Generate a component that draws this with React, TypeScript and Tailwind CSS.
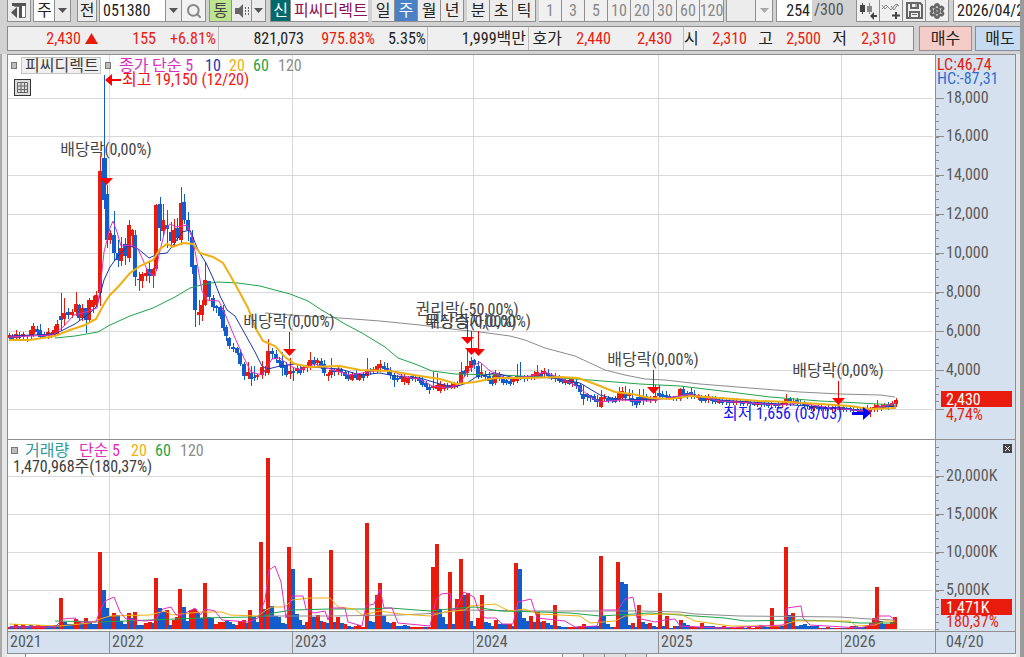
import type { ReactNode } from "react";
import { Search, Settings } from "lucide-react";

const RED = "#e81b0c";
const BLUE = "#125ccb";

// x, high, body top, body bottom, low, 1 = rising week
const candles: number[][] = [
  [9, 333, 335, 338, 340, 1], [12, 334, 336, 339, 340, 0], [16, 330, 334, 338, 340, 1], [19, 332, 335, 338, 339, 0],
  [23, 332, 334, 337, 338, 1], [27, 335, 335, 336, 341, 0], [31, 328, 330, 336, 338, 1], [33, 323, 326, 334, 336, 1],
  [37, 326, 329, 332, 334, 0], [40, 324, 330, 337, 338, 0], [44, 332, 335, 337, 337, 0], [48, 328, 332, 336, 338, 1],
  [51, 332, 333, 335, 337, 0], [54, 326, 330, 335, 336, 1], [57, 320, 324, 334, 335, 1], [61, 293, 316, 320, 330, 0],
  [64, 298, 313, 319, 325, 1], [68, 308, 312, 315, 318, 0], [72, 309, 312, 315, 317, 1], [76, 292, 304, 312, 315, 1],
  [79, 304, 305, 318, 320, 0], [82, 304, 308, 318, 320, 1], [86, 308, 308, 320, 332, 0], [89, 298, 300, 320, 321, 1],
  [93, 296, 300, 307, 312, 1], [96, 291, 295, 305, 306, 1], [100, 156, 171, 293, 305, 1], [104, 75, 158, 200, 208, 0],
  [107, 185, 194, 240, 247, 0], [110, 230, 233, 240, 243, 1], [114, 211, 235, 253, 260, 0], [118, 240, 253, 260, 266, 0],
  [121, 237, 248, 261, 265, 1], [125, 238, 244, 256, 264, 0], [129, 220, 225, 258, 261, 1], [132, 229, 230, 236, 246, 1],
  [135, 230, 235, 277, 285, 0], [139, 272, 279, 280, 290, 0], [142, 272, 274, 281, 287, 1], [146, 268, 273, 276, 280, 1],
  [149, 262, 269, 276, 282, 0], [153, 268, 269, 276, 287, 1], [156, 204, 205, 269, 270, 1], [160, 197, 204, 228, 240, 0],
  [163, 204, 220, 231, 236, 1], [167, 210, 225, 229, 247, 0], [171, 222, 232, 241, 245, 0], [174, 219, 230, 243, 245, 1],
  [177, 218, 228, 238, 240, 0], [181, 187, 203, 240, 244, 1], [184, 194, 202, 220, 223, 0], [188, 212, 220, 230, 240, 0],
  [192, 230, 237, 267, 273, 0], [195, 265, 265, 310, 326, 0], [199, 300, 312, 315, 324, 1], [202, 300, 305, 315, 320, 1],
  [205, 262, 280, 305, 305, 1], [209, 281, 281, 297, 300, 0], [213, 295, 298, 307, 310, 0], [216, 305, 306, 308, 312, 0],
  [220, 306, 307, 316, 318, 0], [223, 305, 310, 328, 330, 0], [226, 325, 327, 336, 340, 0], [229, 337, 338, 346, 348, 0],
  [233, 343, 347, 349, 351, 0], [237, 347, 348, 353, 354, 0], [240, 349, 353, 364, 365, 0], [244, 362, 364, 376, 379, 0],
  [248, 362, 372, 376, 378, 1], [251, 366, 373, 379, 385, 0], [254, 366, 377, 378, 380, 0], [257, 374, 375, 377, 379, 1],
  [262, 361, 367, 375, 378, 1], [265, 366, 370, 372, 375, 0], [268, 339, 351, 373, 374, 1], [272, 348, 351, 354, 358, 0],
  [276, 350, 354, 359, 362, 0], [279, 357, 360, 363, 366, 0], [282, 352, 361, 368, 375, 0], [286, 362, 365, 375, 376, 0],
  [290, 358, 371, 374, 378, 1], [293, 368, 371, 373, 380, 0], [297, 364, 368, 371, 373, 1], [300, 366, 369, 373, 374, 0],
  [303, 365, 367, 370, 372, 1], [307, 362, 365, 368, 371, 1], [310, 352, 360, 367, 369, 1], [314, 357, 360, 364, 366, 0],
  [317, 358, 360, 363, 367, 1], [321, 358, 361, 366, 368, 0], [324, 360, 364, 373, 375, 0], [328, 372, 374, 376, 380, 1],
  [331, 358, 370, 375, 377, 1], [334, 368, 370, 372, 375, 0], [338, 367, 369, 372, 374, 1], [341, 368, 369, 372, 375, 0],
  [345, 370, 372, 376, 378, 0], [348, 371, 375, 379, 380, 0], [352, 372, 374, 380, 380, 1], [356, 370, 374, 378, 379, 0],
  [359, 373, 374, 380, 380, 1], [363, 372, 374, 378, 380, 0], [367, 358, 371, 376, 377, 1], [370, 368, 370, 372, 374, 0],
  [373, 367, 369, 371, 373, 1], [377, 364, 366, 370, 372, 1], [380, 360, 364, 368, 371, 1], [384, 362, 366, 369, 370, 0],
  [387, 363, 368, 370, 373, 0], [390, 367, 370, 375, 378, 0], [394, 372, 375, 380, 386, 0], [397, 375, 378, 380, 381, 0],
  [401, 374, 377, 379, 381, 0], [404, 374, 377, 382, 384, 1], [408, 376, 378, 383, 384, 1], [412, 374, 376, 379, 380, 0],
  [415, 376, 377, 379, 381, 1], [419, 375, 378, 381, 382, 0], [422, 376, 380, 385, 386, 0], [426, 381, 383, 387, 389, 0],
  [429, 384, 387, 390, 393, 0], [433, 372, 386, 388, 389, 1], [437, 373, 385, 389, 390, 1], [440, 381, 384, 391, 392, 1],
  [444, 383, 385, 389, 390, 1], [447, 383, 386, 388, 389, 0], [451, 383, 385, 388, 388, 1], [454, 382, 384, 387, 388, 1],
  [457, 381, 383, 386, 387, 1], [461, 362, 372, 383, 384, 1], [464, 370, 371, 374, 376, 0], [467, 350, 366, 373, 376, 1],
  [471, 357, 361, 368, 371, 1], [474, 359, 360, 365, 368, 0], [478, 361, 366, 377, 378, 0], [481, 363, 372, 375, 377, 1],
  [485, 371, 375, 377, 380, 0], [489, 372, 376, 381, 383, 0], [492, 376, 378, 384, 385, 0], [495, 370, 374, 383, 384, 1],
  [499, 372, 374, 378, 380, 0], [503, 375, 377, 383, 384, 0], [506, 378, 380, 383, 384, 0], [510, 377, 381, 384, 385, 0],
  [513, 378, 379, 382, 384, 1], [517, 364, 376, 381, 382, 1], [520, 362, 376, 377, 379, 0], [524, 375, 376, 379, 381, 0],
  [527, 375, 377, 379, 380, 1], [531, 374, 376, 378, 379, 0], [534, 371, 374, 376, 379, 1], [537, 365, 372, 376, 377, 1],
  [541, 370, 373, 376, 377, 0], [544, 368, 371, 374, 376, 1], [548, 369, 373, 376, 377, 0], [551, 373, 375, 378, 379, 0],
  [555, 373, 376, 379, 381, 0], [559, 375, 378, 381, 382, 0], [562, 377, 379, 382, 383, 0], [565, 378, 380, 383, 384, 1],
  [569, 378, 380, 384, 384, 0], [572, 377, 379, 383, 386, 1], [576, 379, 382, 386, 388, 0], [580, 383, 385, 392, 394, 0],
  [583, 385, 394, 399, 404, 0], [587, 393, 394, 397, 400, 0], [590, 395, 395, 398, 401, 0], [594, 394, 396, 400, 401, 0],
  [597, 395, 399, 402, 406, 0], [601, 390, 397, 407, 407, 1], [604, 394, 397, 399, 400, 1], [608, 396, 398, 401, 402, 0],
  [612, 397, 398, 401, 402, 0], [615, 396, 398, 402, 402, 0], [619, 387, 392, 400, 401, 1], [622, 387, 391, 398, 400, 1],
  [625, 386, 393, 398, 400, 0], [629, 389, 393, 396, 400, 1], [632, 390, 398, 402, 405, 0], [636, 397, 399, 405, 407, 0],
  [639, 389, 397, 403, 404, 0], [643, 389, 396, 400, 404, 1], [646, 394, 396, 400, 401, 0], [650, 396, 398, 400, 402, 1],
  [655, 385, 396, 401, 402, 1], [659, 385, 393, 396, 398, 0], [662, 391, 394, 397, 398, 0], [666, 391, 395, 397, 399, 0],
  [669, 394, 396, 398, 399, 0], [673, 396, 397, 399, 400, 1], [676, 396, 397, 399, 400, 0], [680, 388, 389, 399, 400, 1],
  [683, 386, 389, 395, 396, 0], [687, 391, 393, 396, 398, 0], [691, 388, 392, 395, 398, 0], [694, 390, 394, 396, 398, 0],
  [698, 394, 395, 398, 399, 1], [701, 395, 397, 401, 402, 0], [705, 395, 397, 401, 402, 0], [708, 394, 396, 400, 402, 1],
  [712, 396, 398, 401, 403, 0], [715, 396, 398, 402, 403, 0], [719, 398, 400, 403, 403, 1], [722, 397, 400, 403, 404, 0],
  [726, 399, 400, 402, 404, 0], [729, 399, 401, 403, 405, 0], [733, 400, 401, 403, 404, 0], [736, 398, 401, 403, 404, 1],
  [740, 400, 401, 403, 405, 0], [743, 401, 402, 404, 405, 0], [747, 400, 401, 403, 405, 1], [750, 401, 402, 404, 405, 0],
  [754, 401, 403, 405, 405, 0], [757, 400, 403, 405, 406, 1], [761, 401, 403, 405, 406, 0], [764, 402, 403, 405, 406, 0],
  [768, 402, 403, 406, 407, 0], [771, 401, 403, 405, 407, 1], [775, 403, 404, 406, 407, 0], [778, 402, 404, 406, 406, 0],
  [782, 402, 403, 405, 407, 1], [786, 394, 399, 404, 405, 1], [790, 397, 399, 403, 405, 0], [793, 398, 401, 403, 404, 1],
  [797, 398, 400, 403, 404, 0], [800, 400, 402, 404, 405, 0], [804, 401, 403, 406, 407, 0], [807, 403, 404, 406, 408, 0],
  [811, 404, 406, 408, 410, 0], [814, 405, 406, 408, 410, 1], [818, 405, 406, 409, 410, 0], [821, 404, 407, 409, 410, 0],
  [825, 406, 407, 409, 410, 1], [828, 405, 407, 409, 410, 0], [832, 406, 407, 409, 411, 1], [835, 406, 407, 409, 411, 0],
  [839, 406, 407, 410, 411, 1], [843, 406, 407, 410, 411, 0], [846, 407, 408, 410, 411, 0], [850, 406, 408, 410, 411, 0],
  [853, 407, 409, 411, 412, 0], [857, 407, 409, 411, 412, 0], [860, 408, 410, 412, 414, 0], [864, 408, 410, 412, 414, 1],
  [867, 405, 409, 412, 413, 0], [870, 407, 408, 412, 416, 1], [874, 404, 407, 409, 411, 1], [877, 400, 405, 409, 411, 1],
  [881, 404, 406, 408, 410, 0], [884, 403, 405, 408, 408, 1], [888, 402, 405, 407, 409, 0], [892, 401, 403, 407, 408, 1],
  [896, 398, 400, 404, 406, 1],
];

// x, bar height; negative = falling week
const volumes: number[][] = [
  [9, 2], [12, -3], [16, 5], [20, -3], [23, 4], [27, -3], [31, -4], [34, 3], [38, 4], [42, 3], [45, 3], [48, -3], [51, -3],
  [55, 4], [58, -4], [61, 31], [65, -7], [68, -5], [72, -5], [76, 10], [79, 7], [82, -6], [86, 11], [90, -7], [93, -5],
  [97, -5], [100, 77], [104, -39], [107, -21], [110, -13], [114, 16], [118, -14], [121, -8], [125, -5], [129, 16],
  [132, -11], [135, 17], [138, -4], [142, -4], [146, 6], [150, 7], [153, -6], [156, 51], [160, -21], [163, -17], [167, 19],
  [170, -4], [174, 9], [177, 12], [180, 40], [184, -22], [187, -8], [191, 19], [195, 20], [198, -16], [201, -11], [205, 46],
  [209, -12], [212, -11], [216, 5], [220, 7], [223, 7], [227, -8], [230, -7], [233, -5], [237, 4], [240, 8], [244, 9],
  [247, -6], [250, 19], [254, -12], [257, -7], [261, 87], [265, -20], [268, 171], [272, -23], [276, -13], [279, -12],
  [283, -6], [286, -5], [289, 82], [293, -60], [297, -15], [300, -9], [303, -4], [307, 7], [310, 51], [314, -12], [318, 14],
  [321, -8], [324, 7], [328, -6], [331, 79], [335, -7], [338, 12], [342, -6], [345, 5], [349, -3], [352, -2], [356, 3],
  [359, 4], [363, 2], [367, 106], [370, -8], [373, -7], [377, 34], [380, 46], [384, -13], [387, -7], [391, -6], [394, 7],
  [397, -3], [401, -3], [405, -4], [408, -3], [412, 2], [415, 2], [419, 2], [422, 2], [426, -2], [429, 2], [433, 62],
  [437, 85], [440, -20], [443, -12], [446, -5], [450, 57], [454, -5], [457, 30], [461, 70], [465, -34], [468, 36], [471, -8],
  [475, -3], [478, 11], [482, 34], [486, -7], [489, -6], [492, -3], [496, 9], [499, -5], [503, -5], [507, -5], [510, 5],
  [513, -3], [516, 66], [520, -60], [524, -11], [527, -8], [531, 13], [535, -7], [538, 17], [541, -7], [544, 8], [548, -6],
  [552, -4], [555, 24], [559, -3], [562, -2], [566, -2], [570, 2], [573, 2], [577, -2], [580, 3], [584, 5], [587, -3],
  [591, -3], [594, -3], [597, -3], [601, 73], [604, -13], [608, -5], [612, -2], [615, 2], [618, 67], [622, -47], [626, -45],
  [629, -4], [633, 6], [636, -2], [639, 24], [643, -7], [646, -5], [650, 6], [654, -3], [657, -2], [660, 36], [663, -3],
  [667, 13], [671, -1], [675, 3], [678, -3], [681, 9], [684, -6], [688, -4], [691, 3], [695, 2], [699, -2], [702, 6],
  [706, -3], [710, -3], [713, -3], [717, 2], [720, -2], [724, 3], [727, -2], [731, 2], [734, 1], [738, 2], [742, 2],
  [745, -1], [749, 2], [753, 1], [757, 2], [761, 4], [764, -3], [768, -2], [772, 21], [775, 3], [779, 3], [782, -3],
  [786, 82], [790, -14], [793, 16], [797, -3], [801, -4], [805, -5], [809, -3], [813, -3], [817, -3], [820, 1], [824, -1],
  [828, 2], [832, -1], [836, 1], [840, 1], [844, -1], [848, 1], [852, 3], [856, -3], [860, -2], [864, -2], [868, 3],
  [871, 6], [874, 11], [877, 42], [881, -8], [884, -5], [888, 5], [892, 7], [895, 12],
];

const priceMa = [
  {
    color: "#8c8c8c",
    width: 1,
    points: "265,313 290,315 340,318 380,321 420,325 460,330 480,332 510,336 525,340 545,348 560,352 575,356 590,363 605,370 625,375 645,379 665,380 700,384 750,388 800,392 840,394 880,395 895,397",
  },
  {
    color: "#1fa34a",
    width: 1,
    points: "55,338 75,336 98,332 110,325 130,316 153,308 175,297 190,288 205,284 218,282 238,283 260,286 290,294 308,301 320,309 345,324 362,333 385,347 398,358 415,364 432,371 455,374 500,375 560,378 590,380 640,384 680,386 730,392 770,397 820,401 860,403 896,405",
  },
  {
    color: "#1b35ad",
    width: 1,
    points: "9,336 55,334 75,324 90,313 97,306 104,280 110,267 118,256 128,246 137,248 149,258 158,254 167,253 174,244 182,232 190,230 198,250 206,263 213,278 220,296 227,310 235,316 245,334 255,352 262,366 268,369 280,366 295,364 310,367 340,369 360,375 380,373 395,376 420,378 440,384 455,387 467,383 476,377 495,373 515,378 540,377 560,379 580,383 600,395 615,399 650,400 690,395 720,400 780,404 820,407 860,410 896,406",
  },
  {
    color: "#e22fbd",
    width: 1,
    points: "9,337 53,335 63,327 74,315 86,312 97,308 100,290 104,252 110,228 113,221 117,232 121,246 132,245 138,249 143,260 148,272 155,276 159,255 165,230 170,224 177,227 187,225 193,240 198,268 202,291 207,300 219,301 225,314 235,338 244,358 251,372 262,375 272,359 280,358 290,366 300,370 315,364 330,369 350,375 375,371 390,370 405,377 420,379 432,386 448,388 458,385 465,376 473,366 480,362 490,371 508,379 530,376 545,372 565,380 580,388 590,397 600,402 620,400 650,401 690,394 720,401 780,405 800,403 830,408 865,411 880,407 896,403",
  },
  {
    color: "#efb011",
    width: 2,
    points: "9,340 30,340 55,336 70,330 85,325 96,319 104,304 110,295 118,287 130,273 140,266 153,260 160,249 167,244 173,247 183,243 193,244 200,253 213,257 223,263 230,275 240,293 248,308 256,329 263,341 275,346 285,357 295,364 310,367 340,366 360,370 390,371 420,376 440,379 457,384 475,382 495,378 530,378 560,377 578,378 595,384 615,392 632,394 650,398 670,399 690,396 720,398 760,401 790,402 820,404 850,406 870,409 896,408",
  },
];

const volumeMa = [
  {
    color: "#8c8c8c",
    points: "265,616 330,616 400,615 440,613 460,610 540,611 640,611 680,612 695,614 740,616 840,617 870,619 895,620",
  },
  {
    color: "#1fa34a",
    points: "55,621 100,622 150,620 200,618 250,617 265,616 273,613 292,610 330,609 370,609 390,608 430,611 460,608 475,607 500,611 540,612 570,613 600,616 650,613 725,618 745,621 800,620 830,621 860,623 895,623",
  },
  {
    color: "#efb011",
    points: "9,624 60,626 90,623 100,619 110,616 150,615 165,611 172,615 200,612 222,612 230,615 258,616 266,610 272,607 285,607 292,600 310,598 330,598 338,607 355,609 362,615 380,611 400,614 430,616 445,612 465,610 470,606 495,604 503,608 510,611 524,609 540,614 580,616 590,623 615,621 625,616 660,614 680,614 695,621 730,626 780,626 795,621 850,621 856,626 875,625 885,621 895,621",
  },
  {
    color: "#e22fbd",
    points: "9,627 55,627 63,619 75,618 80,622 96,622 100,610 105,601 114,597 120,612 126,619 145,621 155,620 163,609 171,607 176,615 182,615 195,608 200,615 205,609 215,611 222,620 248,622 258,618 265,600 269,570 275,566 281,582 286,618 292,596 303,596 306,609 314,613 325,611 328,620 332,608 345,608 348,622 362,626 366,606 374,604 380,589 384,608 392,608 398,623 430,626 436,600 441,594 450,593 452,610 456,609 464,592 474,597 478,609 485,618 496,618 502,624 513,624 518,602 531,599 537,618 565,621 575,627 597,626 602,610 618,610 625,599 633,597 637,618 655,622 665,620 675,619 680,626 720,628 784,625 787,608 801,606 803,618 810,625 860,628 875,624 878,616 890,616 895,620",
  },
];

const yearLines = [109, 292, 473, 658, 841];
const priceTicks = [98, 136, 175, 214, 253, 292, 331, 370, 409];
const volumeTicks = [476, 514, 552, 590];

const dividends = [
  { x: 106, y: 155, text: "배당락(0,00%)", from: 158, tip: 185 },
  { x: 289, y: 327, text: "배당락(0,00%)", from: 332, tip: 356 },
  { x: 467, y: 315, text: "권리락(-50,00%)", from: 320, tip: 344 },
  { x: 471, y: 327, text: "배당락(0,00%)", from: 331, tip: 355 },
  { x: 478, y: 327, text: "무상증자(0,00%)", from: 331, tip: 356 },
  { x: 653, y: 365, text: "배당락(0,00%)", from: 370, tip: 394 },
  { x: 838, y: 376, text: "배당락(0,00%)", from: 381, tip: 405 },
];

function Lines({ lines }: { lines: { color: string; points: string; width?: number }[] }) {
  return (
    <>
      {lines.map((l) => (
        <polyline key={l.color} points={l.points} fill="none" stroke={l.color} strokeWidth={l.width ?? 1} />
      ))}
    </>
  );
}

function PriceChart() {
  return (
    <svg viewBox="8 55 927 384" preserveAspectRatio="xMinYMin meet" className="block h-[384px] min-w-0 flex-1 bg-white" fontSize="16">
      <g stroke="#d9d9d9" shapeRendering="crispEdges">
        {priceTicks.map((y) => <path key={y} d={`M8 ${y}.5H933`} />)}
        {yearLines.map((x) => <path key={x} d={`M${x}.5 55V439`} />)}
      </g>
      <g shapeRendering="crispEdges">
        {candles.map(([x, high, top, bottom, low, up]) => (
          <g key={x} fill={up ? RED : BLUE}>
            <rect x={x} y={high} width="1" height={low - high + 1} />
            <rect x={x - 2} y={top} width="4" height={Math.max(bottom - top, 1)} />
          </g>
        ))}
      </g>
      <Lines lines={priceMa} />
      {dividends.map((d) => (
        <g key={d.x}>
          <path d={`M${d.x + 0.5} ${d.from}V${d.tip - 6}`} stroke={d.x === 106 ? BLUE : "#f00000"} />
          <path d={`M${d.x - 6} ${d.tip - 7}h13l-6.500 7z`} fill="#ff0000" />
          <text x={d.x} y={d.y} textAnchor="middle" fill="#444">{d.text}</text>
        </g>
      ))}
      <path d="M105 80l7-6v5h9v2h-9v5z" fill="#ff0000" />
      <text x="122" y="85" fill="#f51212">최고 19,150 (12/20)</text>
      <path d="M852 412h11v-5l8 6-8 7v-5h-11z" fill="#0000ff" />
      <text x="723" y="419" fill="#1414f0">최저 1,656 (03/03)</text>
      <g fill="#bdbdbd" stroke="#777">
        <rect x="11.500" y="62.500" width="5" height="6" />
        <rect x="105.500" y="62.500" width="5" height="6" />
      </g>
      <rect x="21.500" y="57.500" width="79" height="16" fill="#f0f0f0" stroke="#c4c4c4" />
      <text x="25" y="71" fill="#3c3c3c">피씨디렉트</text>
      <text y="71">
        <tspan x="119" fill="#d92fc0">종가 단순 5</tspan>
        <tspan x="205" fill="#1b35ad">10</tspan>
        <tspan x="229" fill="#efb011">20</tspan>
        <tspan x="253" fill="#1fa34a">60</tspan>
        <tspan x="278" fill="#8c8c8c">120</tspan>
      </text>
      <g fill="none" stroke="#333">
        <rect x="14.500" y="79.500" width="16" height="16" fill="#ddd" />
        <path d="M17.500 82.500h10v10h-10zM17.500 86h10M17.500 89.500h10M21 82.500v10M24.500 82.500v10" stroke="#666" />
      </g>
    </svg>
  );
}

function VolumeChart() {
  return (
    <svg viewBox="8 440 927 191" preserveAspectRatio="xMinYMin meet" className="block h-[191px] min-w-0 flex-1 bg-white" fontSize="16">
      <g stroke="#d9d9d9" shapeRendering="crispEdges">
        {volumeTicks.map((y) => <path key={y} d={`M8 ${y}.5H933`} />)}
        {yearLines.map((x) => <path key={x} d={`M${x}.5 440V631`} />)}
        <path d="M8 629.5H935" />
      </g>
      <g shapeRendering="crispEdges">
        {volumes.map(([x, h]) => (
          <rect key={x} x={x - 2} y={629 - Math.abs(h)} width="4" height={Math.abs(h)} fill={h > 0 ? RED : BLUE} />
        ))}
      </g>
      <Lines lines={volumeMa} />
      <rect x="11.500" y="447.500" width="6" height="6" fill="#bdbdbd" stroke="#777" />
      <text y="456">
        <tspan x="25" fill="#2f9a9a">거래량</tspan>
        <tspan x="79" fill="#e22fbd">단순 5</tspan>
        <tspan x="131" fill="#efb011">20</tspan>
        <tspan x="155" fill="#1fa34a">60</tspan>
        <tspan x="180" fill="#8c8c8c">120</tspan>
      </text>
      <text x="13" y="472" fill="#3c3c3c">1,470,968주(180,37%)</text>
    </svg>
  );
}

function PriceAxis() {
  const minor = Array.from({ length: 41 }, (_, i) => 98 + Math.round(i * 7.78));
  return (
    <svg viewBox="936 55 79 384" className="block h-[384px] w-[79px] shrink-0 bg-[#d6e1ef]" fontSize="16" fill="#5a5a5a">
      <g stroke="#8a8a8a" shapeRendering="crispEdges">
        {minor.map((y) => <path key={y} d={`M936 ${y}.5h3`} />)}
        {priceTicks.map((y) => <path key={y} d={`M936 ${y}.5h8`} />)}
      </g>
      {priceTicks.slice(0, 8).map((y, i) => (
        <text key={y} x="946" y={y + 5}>{`${18 - i * 2},000`}</text>
      ))}
      <text x="937" y="70" fill={RED}>LC:46,74</text>
      <text x="937" y="84" fill="#2f6fd0">HC:-87,31</text>
      <rect x="941" y="391" width="71" height="16" fill={RED} />
      <text x="946" y="405" fill="#fff">2,430</text>
      <text x="946" y="420" fill={RED}>4,74%</text>
    </svg>
  );
}

function VolumeAxis() {
  const minor = Array.from({ length: 25 }, (_, i) => 447 + Math.round(i * 7.6));
  return (
    <svg viewBox="936 440 79 191" className="block h-[191px] w-[79px] shrink-0 bg-[#d6e1ef]" fontSize="16" fill="#5a5a5a">
      <g stroke="#8a8a8a" shapeRendering="crispEdges">
        {minor.map((y) => <path key={y} d={`M936 ${y}.5h3`} />)}
        {volumeTicks.map((y) => <path key={y} d={`M936 ${y}.5h8`} />)}
      </g>
      {volumeTicks.map((y, i) => (
        <text key={y} x="946" y={y + 5}>{`${20 - i * 5},000K`}</text>
      ))}
      <rect x="941" y="599" width="71" height="16" fill={RED} />
      <text x="946" y="613" fill="#fff">1,471K</text>
      <text x="946" y="627" fill={RED}>180,37%</text>
      <rect x="1003" y="444" width="9" height="9" fill="#444" />
      <path d="M1005 446l5 5M1010 446l-5 5" stroke="#fff" />
    </svg>
  );
}

function ToolButton({ children, className = "", label }: { children?: ReactNode; className?: string; label?: string }) {
  return (
    <button
      type="button"
      aria-label={label}
      className={`flex h-[22px] shrink-0 items-center justify-center border-r border-b border-[#8f8f8f] text-base leading-5 ${className}`}
    >
      {children}
    </button>
  );
}

function Arrow({ className = "fill-[#555]" }: { className?: string }) {
  return (
    <svg viewBox="0 0 9 5" className={`h-[5px] w-[9px] ${className}`}>
      <path d="M0 0h9L4.500 5z" />
    </svg>
  );
}

function Toolbar() {
  return (
    <div className="flex h-[22px] shrink-0 pl-[7px] text-[#222]">
      <ToolButton label="패널" className="mr-0.5 w-6 border-l bg-[#ececec]">
        <svg viewBox="0 0 16 17" className="h-[17px] w-4">
          <path d="M3.500 1.500h11v14h-4v-11h-7z" fill="#fff" stroke="#777" />
          <path d="M1 1h14v3H1zM8 4h3v12H8zM6 5v11L0 10.500z" fill="#555" />
        </svg>
      </ToolButton>
      <select aria-label="차트 구분" className="h-[22px] w-[21px] shrink-0 appearance-none border-b border-l border-[#8f8f8f] bg-white pl-[3px] text-base leading-5">
        <option>주</option>
      </select>
      <ToolButton label="구분 열기" className="mr-1.5 w-[17px] border-l bg-[#ececec]"><Arrow /></ToolButton>
      <ToolButton className="mr-0.5 w-5 border-l bg-[#ececec]">전</ToolButton>
      <input aria-label="종목코드" defaultValue="051380" className="h-[22px] w-[66px] shrink-0 border-b border-l border-[#8f8f8f] bg-white pl-[3px] text-base leading-5" />
      <ToolButton label="종목 목록" className="w-[17px] border-l bg-[#ececec]"><Arrow /></ToolButton>
      <ToolButton label="종목 검색" className="mr-[3px] w-6 bg-[#f2f2f2]"><Search size={16} strokeWidth={3} color="#888" /></ToolButton>
      <ToolButton className="w-[23px] border-l bg-[#bde58f] text-[#444]">통</ToolButton>
      <ToolButton label="소리" className="w-5 bg-[#ececec]">
        <svg viewBox="0 0 16 14" className="h-3.5 w-4" fill="#666">
          <path d="M1 4h4l4-4v14L5 10H1z" />
          <path d="M11 3h1v2h-1zM14 3h1v2h-1zM11 6h1v2h-1zM14 6h1v2h-1zM11 9h1v2h-1zM14 9h1v2h-1z" />
        </svg>
      </ToolButton>
      <ToolButton label="소리 설정" className="mr-1 w-[14px] bg-[#ececec]"><Arrow /></ToolButton>
      <ToolButton className="w-[21px] border-l bg-[#04696b] text-white">신</ToolButton>
      <div className="mr-1 flex h-[22px] w-[77px] shrink-0 items-center border-b border-[#8f8f8f] bg-white pl-[3px] text-base leading-5 text-[#8c0f57]">피씨디렉트</div>
      {["일", "주", "월", "년"].map((t) => (
        <ToolButton key={t} className={t === "주" ? "w-[23px] bg-[#4a80c4] text-white" : "w-[23px] bg-[#ececec]"}>{t}</ToolButton>
      ))}
      <div className="w-[3px] shrink-0" />
      {["분", "초", "틱"].map((t) => <ToolButton key={t} className="w-[23px] bg-[#ececec]">{t}</ToolButton>)}
      <div className="w-[3px] shrink-0" />
      {["1", "3", "5", "10", "20", "30", "60"].map((t) => (
        <ToolButton key={t} className="w-[23px] bg-[#f0f0f0] text-[#888]">{t}</ToolButton>
      ))}
      <ToolButton className="w-6 bg-[#f0f0f0] text-[#888]">120</ToolButton>
      <ToolButton label="사용자 주기" className="ml-0.5 w-[30px] border-l bg-[#ececec]" />
      <ToolButton label="주기 목록" className="mr-[3px] w-[17px] bg-[#f2f2f2]"><Arrow className="fill-[#aaa]" /></ToolButton>
      <input aria-label="표시 개수" defaultValue="254" className="h-[22px] w-[36px] shrink-0 border-b border-l border-[#8f8f8f] bg-white pr-0.5 text-right text-base leading-5" />
      <span className="w-[44px] shrink-0 pl-0.5 text-base leading-5 text-[#555]">/300</span>
      <ToolButton label="캔들 추가" className="w-6 border-l bg-[#f0f0f0]">
        <svg viewBox="0 0 18 18" className="h-[18px] w-[18px]" fill="#444">
          <path d="M1 3h5v7H1zM3 1h1v11H3z" />
          <path d="M8 4h5v6H8zM10 1h1v11h-1z" fill="#888" />
          <path d="M11 14l4-4v3h3v2h-3v3z" />
        </svg>
      </ToolButton>
      <ToolButton label="지표 추가" className="w-[23px] bg-[#f0f0f0]">
        <svg viewBox="0 0 18 18" className="h-[18px] w-[18px]" fill="none" stroke="#888">
          <path d="M0 7l4-4 5 5 5-6 3 2M0 3l3 4 3-3M9 4l3 4 4-6" />
          <path d="M14 10v7M10 13.500h8" stroke="#444" strokeWidth="2" />
        </svg>
      </ToolButton>
      <ToolButton label="저장" className="w-[23px] bg-[#f0f0f0]">
        <svg viewBox="0 0 17 17" className="h-[17px] w-[17px]" fill="none" stroke="#666" strokeWidth="2">
          <path d="M1 1h13l2 2v13H1z" />
          <path d="M5 1v5h7V1M4 16v-6h9v6" />
          <path d="M10 2v3M6 12.500h5" strokeWidth="1" />
        </svg>
      </ToolButton>
      <ToolButton label="설정" className="mr-1 w-[23px] bg-[#f0f0f0]"><Settings size={16} strokeWidth={4} color="#666" /></ToolButton>
      <input aria-label="기준일" defaultValue="2026/04/20" className="h-[22px] min-w-0 flex-1 border-b border-l border-[#8f8f8f] bg-white pl-[3px] text-base leading-5" />
    </div>
  );
}

function QuoteBar() {
  return (
    <div className="mt-1 flex h-[25px] shrink-0 gap-[5px] pl-[7px] text-base leading-[23px] whitespace-nowrap">
      <div className="flex min-w-0 flex-1 border border-[#8a8a8a] bg-[#efefef] text-right text-[#e8200f]">
        <span className="w-[73px]">2,430</span>
        <svg viewBox="0 0 13 11" className="mt-1.5 ml-1 h-[11px] w-[13px]" fill={RED}><path d="M6.500 0L13 11H0z" /></svg>
        <span className="w-[58px]">155</span>
        <span className="w-[60px]">+6.81%</span>
        <span className="ml-0.5 w-[86px] border-l border-[#bbb] text-[#222]">821,073</span>
        <span className="w-[71px]">975.83%</span>
        <span className="w-[51px] text-[#222]">5.35%</span>
        <span className="ml-px w-[99px] border-l border-[#bbb] text-[#222]">1,999백만</span>
        <span className="ml-0.5 w-[34px] border-l border-[#bbb] text-[#222]">호가</span>
        <span className="w-[49px]">2,440</span>
        <span className="w-[61px]">2,430</span>
        <span className="ml-[11px] w-[15px] border-l border-[#bbb] text-[#222]">시</span>
        <span className="w-[49px]">2,310</span>
        <span className="w-[26px] text-[#222]">고</span>
        <span className="w-[48px]">2,500</span>
        <span className="w-[26px] text-[#222]">저</span>
        <span className="w-[49px]">2,310</span>
      </div>
      <button type="button" className="w-[53px] shrink-0 border border-[#9a8a8a] bg-[#f4cdc8] text-[#222]">매수</button>
      <button type="button" className="-ml-0.5 w-[45px] shrink-0 border border-r-0 border-[#8a8a9a] bg-[#c5dbf1] pl-1 text-[#222]">매도</button>
    </div>
  );
}

export default function App() {
  return (
    <div className="flex min-h-screen w-full overflow-hidden bg-[#d2d2d2] font-['Roboto_Condensed','Noto_Sans_CJK_KR',sans-serif]">
      <div className="flex min-w-0 flex-1 flex-col">
        <Toolbar />
        <QuoteBar />
        <div className="mt-[3px] flex flex-1 bg-[#e6e6e6]">
          <div className="w-[7px] shrink-0 border-l-2 border-[#aaa]" />
          <div className="min-w-0 flex-1">
            <div className="border border-[#8f8f8f]">
              <div className="flex divide-x divide-[#8f8f8f]">
                <PriceChart />
                <PriceAxis />
              </div>
              <div className="flex divide-x divide-[#8f8f8f] border-t border-[#8f8f8f]">
                <VolumeChart />
                <VolumeAxis />
              </div>
              <div className="flex h-[22px] border-t border-[#8f8f8f] bg-[#d6e1ef] text-base leading-5 text-[#5a5a5a]">
                <span className="w-[101px] pl-0.5">2021</span>
                <span className="w-[183px] border-l border-[#8f8f8f] pl-0.5">2022</span>
                <span className="w-[181px] border-l border-[#8f8f8f] pl-0.5">2023</span>
                <span className="w-[185px] border-l border-[#8f8f8f] pl-0.5">2024</span>
                <span className="w-[183px] border-l border-[#8f8f8f] pl-0.5">2025</span>
                <span className="min-w-0 flex-1 border-l border-[#8f8f8f] pl-0.5">2026</span>
                <span className="w-20 shrink-0 border-l border-[#8f8f8f] pl-2.5">04/20</span>
              </div>
            </div>
            <div className="flex h-[3px] divide-x divide-[#888] bg-[#f2f2f2]">
              <div className="w-[19px]" />
              <div className="w-[537px] bg-[#fafafa]" />
              <div className="w-[21px]" />
              <div className="w-[21px] bg-[#e2e2e2]" />
              <div className="w-[21px] bg-[#e2e2e2]" />
              <div className="w-[21px] bg-[#e2e2e2]" />
              <div className="flex-1" />
            </div>
          </div>
          <div className="w-1 shrink-0" />
        </div>
      </div>
      <div className="w-1 shrink-0 bg-[#9b9b9b]" />
    </div>
  );
}
